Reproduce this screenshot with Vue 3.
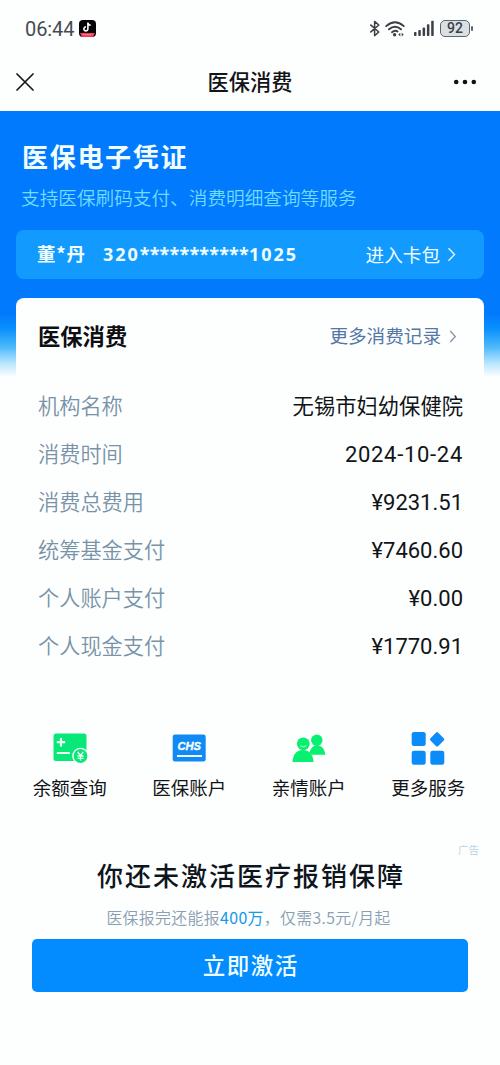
<script setup>
const rows = [
  { label: '机构名称', value: '无锡市妇幼保健院', kind: 'cjk' },
  { label: '消费时间', value: '2024-10-24', kind: 'date' },
  { label: '消费总费用', value: '¥9231.51', kind: 'money' },
  { label: '统筹基金支付', value: '¥7460.60', kind: 'money' },
  { label: '个人账户支付', value: '¥0.00', kind: 'money' },
  { label: '个人现金支付', value: '¥1770.91', kind: 'money' },
]
</script>

<template>
  <div class="page">
    <header class="status">
      <span class="time">06:44</span>
      <svg class="app-badge" width="17" height="17" viewBox="0 0 17 17">
        <defs><clipPath id="badge"><rect width="17" height="17" rx="4" /></clipPath></defs>
        <g clip-path="url(#badge)">
          <rect width="17" height="17" fill="#050507" />
          <path d="M1 13h15l-2 4H3z" fill="#f13a5c" />
          <path d="M3.5 14.7h10" stroke="#ff9bad" stroke-width="1" stroke-dasharray="1.6 .7" />
        </g>
        <path d="M8.9 2.6v6.2a2 2 0 1 1-2-1.9M8.9 2.8c.3 1.5 1.3 2.3 2.8 2.4" fill="none" stroke="#fff" stroke-width="1.6" />
      </svg>
      <div class="signals">
        <svg width="12" height="17" viewBox="0 0 12 17" fill="none" stroke="#3b4045" stroke-width="1.5" stroke-linejoin="round">
          <path d="M1.3 4.6 9.8 12 5.6 15.6V1.4L9.8 5 1.3 12.4" />
        </svg>
        <svg class="wifi" width="20" height="17" viewBox="0 0 20 17" fill="none" stroke="#3b4045" stroke-width="1.9" stroke-linecap="round">
          <path d="M1.2 6.1Q10 -1.6 18.8 6.1M4 9.3Q10 4 16 9.3M7 12.2Q10 9.6 12.5 11.5" />
          <circle cx="9.6" cy="14.7" r="1.7" fill="#3b4045" stroke="none" />
          <path d="m15.3 12.8-2 1.8 2 1.8zM16.7 12.8l2 1.8-2 1.8z" fill="#3b4045" stroke="none" />
        </svg>
        <svg class="bars" width="20" height="17" viewBox="0 0 20 17" fill="#3b4045">
          <rect x="0" y="12" width="2.5" height="4" rx=".8" />
          <rect x="4.3" y="10" width="2.5" height="6" rx=".8" />
          <rect x="8.6" y="7.6" width="2.5" height="8.4" rx=".8" />
          <rect x="12.9" y="4.2" width="2.5" height="11.8" rx=".8" />
          <rect x="17.2" y=".8" width="2.5" height="15.2" rx=".8" />
        </svg>
        <div class="battery">92</div>
        <i class="battery-tip"></i>
      </div>
    </header>

    <nav class="nav">
      <svg class="close" width="18" height="18" viewBox="0 0 18 18" fill="none" stroke="#15171a" stroke-width="1.7" stroke-linecap="round">
        <path d="m1 1 16 16M17 1 1 17" />
      </svg>
      <h1>医保消费</h1>
      <svg class="dots" width="24" height="6" viewBox="0 0 24 6" fill="#111">
        <circle cx="3.2" cy="3" r="2.3" /><circle cx="12" cy="3" r="2.3" /><circle cx="20.8" cy="3" r="2.3" />
      </svg>
    </nav>

    <main class="main">
      <h2 class="hero-title">医保电子凭证</h2>
      <p class="hero-sub">支持医保刷码支付、消费明细查询等服务</p>

      <div class="member">
        <span class="name">董*丹</span>
        <span class="number">320<span class="mask">***********</span>1025</span>
        <span class="enter">进入卡包</span>
        <svg class="arrow" width="9" height="15" viewBox="0 0 9 15" fill="none" stroke="#e2faff" stroke-width="1.4">
          <path d="m1.5 1.2 6 6.3-6 6.3" />
        </svg>
      </div>

      <section class="card">
        <div class="card-head">
          <h3>医保消费</h3>
          <span class="more">更多消费记录</span>
          <svg width="8" height="13" viewBox="0 0 8 13" fill="none" stroke="#7d8ea3" stroke-width="1.2">
            <path d="m1.3 1 5 5.500-5 5.500" />
          </svg>
        </div>
        <div v-for="row in rows" :key="row.label" class="row">
          <span class="label">{{ row.label }}</span>
          <span class="value" :class="row.kind">{{ row.value }}</span>
        </div>
      </section>
    </main>

    <section class="services">
      <div class="service">
        <svg width="36" height="36" viewBox="0 0 36 36">
          <rect x="1.500" y="3.500" width="33" height="27.500" rx="2.500" fill="#08e878" />
          <path d="M4.800 12.200h8.400M9 8v8.400M4.800 23h13" stroke="#effff6" stroke-width="2.200" />
          <circle cx="28.500" cy="26" r="8.300" fill="#fff" />
          <circle cx="28.500" cy="26" r="6.900" fill="#08e878" />
          <path d="m25.600 22 2.900 3.500 2.900-3.500M28.500 25.500v5M25.500 26h6M25.500 28.300h6" fill="none" stroke="#effff6" stroke-width="1.300" />
        </svg>
        <span>余额查询</span>
      </div>
      <div class="service">
        <svg width="36" height="36" viewBox="0 0 36 36">
          <rect x="1.700" y="4.500" width="33" height="27" rx="2.300" fill="#118bf3" />
          <text x="18.300" y="19.800" text-anchor="middle" textLength="23.500" lengthAdjust="spacingAndGlyphs" class="chs">CHS</text>
          <path d="M6 26h25" stroke="#eefaff" stroke-width="2" />
        </svg>
        <span>医保账户</span>
      </div>
      <div class="service">
        <svg width="36" height="36" viewBox="0 0 36 36" fill="#08f070">
          <circle cx="25.800" cy="10.300" r="5.700" />
          <path d="M18 24.700c.6-5 3.500-9.500 8-9.500s7.900 4 8.300 9.500z" />
          <path d="M.5 33c.2-8 4.500-12.600 11.300-12.600S22.800 25 23 33z" fill="#fdfefe" />
          <circle cx="12.300" cy="13.800" r="7.400" fill="#fdfefe" />
          <circle cx="12.300" cy="13.800" r="6.400" />
          <path d="M1.500 32c.2-6.500 3.500-12 10.500-12s10.300 5.500 10.500 12z" />
          <path d="M9.300 15.800q3 2 6 0" fill="none" stroke="#bfffdc" stroke-width="1" />
        </svg>
        <span>亲情账户</span>
      </div>
      <div class="service">
        <svg width="36" height="36" viewBox="0 0 36 36" fill="#0c8cf8">
          <rect x="1.700" y="2" width="14" height="14" rx="2.300" />
          <rect x="21.600" y="3.800" width="11" height="11" rx="1.600" transform="rotate(45 27.100 9.300)" />
          <rect x="1.700" y="20.800" width="14" height="14" rx="2.300" />
          <rect x="20.300" y="20.800" width="14" height="14" rx="2.300" />
        </svg>
        <span>更多服务</span>
      </div>
    </section>

    <section class="promo">
      <small>广告</small>
      <h4>你还未激活医疗报销保障</h4>
      <p>医保报完还能报<b>400万</b>，仅需3.5元/月起</p>
      <button type="button">立即激活</button>
    </section>
  </div>
</template>

<style>
body { background: #fff; }
</style>

<style scoped>
* { box-sizing: border-box; margin: 0; padding: 0; }
svg { display: block; flex: none; }
.page {
  width: 500px; height: 1065px; overflow: hidden; background: #fdfefe;
  font-family: "Noto Sans CJK SC", "Noto Sans", sans-serif; white-space: nowrap;
}
.status { height: 56px; padding: 1px 27px 0 25px; display: flex; align-items: center; }
.time { width: 49px; font: 400 20px/24px Roboto, sans-serif; color: #454b52; letter-spacing: -.1px; }
.app-badge { margin-left: 5px; }
.signals { margin-left: auto; display: flex; align-items: center; }
.wifi { margin-left: 4px; }
.bars { margin-left: 9px; }
.battery {
  margin-left: 6px; width: 30px; height: 17px; border: 1.500px solid #5e656b; border-radius: 5px;
  background: #dbe0e4; color: #3b4045; font: 500 14px/15px Roboto, sans-serif; text-align: center;
}
.battery-tip { width: 2px; height: 5px; margin-left: 1px; border-radius: 1px; background: #5e656b; }

.nav { height: 55px; padding: 0 23px 4px 16px; display: grid; grid-template-columns: 81px 1fr 74px; align-items: center; }
.nav h1 { margin-top: -2px; text-align: center; font-size: 21.200px; line-height: 30px; font-weight: 500; color: #121417; }
.dots { justify-self: end; }

.main {
  height: 591px; padding: 26px 16px 0;
  background: linear-gradient(180deg, #017afe 0, #017afe 203px, #0991fd 218px, #4db9fb 236px, #bce8fe 253px, #fdfefe 266px);
}
.hero-title { padding-left: 6px; font-size: 26px; line-height: 38px; font-weight: 700; letter-spacing: 1.700px; color: #f1fdff; }
.hero-sub { padding-left: 5px; margin-top: 8px; font-size: 18.650px; line-height: 28px; font-weight: 350; color: #70dcff; }
.member {
  margin-top: 19px; height: 49px; border-radius: 8px; background: #129aff; color: #effdff;
  padding: 0 28px 0 21px; display: flex; align-items: center;
}
.name { width: 66px; margin-top: -3px; font-size: 18.500px; font-weight: 700; letter-spacing: .8px; }
.number { margin-top: -2px; font: 700 18px/28px "Noto Sans", sans-serif; letter-spacing: 1.950px; }
.mask { letter-spacing: .170px; }
.enter { margin-left: auto; margin-top: -3px; font-size: 18.600px; font-weight: 400; }
.arrow { margin-left: 7px; }

.card { margin-top: 19px; height: 404px; border-radius: 8px; background: #fdfefe; padding: 14px 21px 0 22px; }
.card-head { height: 48px; display: flex; align-items: center; padding-right: 6px; }
.card-head h3 { margin-top: -2px; font-size: 22.300px; font-weight: 700; color: #0d0f12; }
.more { margin-left: auto; margin-top: -3px; margin-right: 8px; font-size: 18.600px; font-weight: 400; color: #5478a6; }
.row { height: 48px; display: flex; align-items: center; justify-content: space-between; }
.row:nth-child(2) { margin-top: 22px; }
.label { margin-top: -4px; font-size: 21.200px; font-weight: 350; color: #7893a8; }
.value { font-size: 21.300px; font-weight: 400; color: #111417; }
.value.cjk { margin-top: -4px; }
.value.date, .value.money { font-family: Roboto, sans-serif; font-size: 22px; }
.value.date { letter-spacing: .7px; }

.services { margin: 28px 12px 0 10px; display: grid; grid-template-columns: repeat(4, 1fr); }
.service { display: flex; flex-direction: column; align-items: center; color: #121417; }
.service span { margin-top: 7px; font-size: 18.500px; line-height: 28px; }
.chs { font: italic 700 11px "Liberation Sans", sans-serif; fill: #f5fcff; stroke: #f5fcff; stroke-width: .4px; }

.promo { margin-top: 41px; padding: 0 32px; text-align: center; display: flex; flex-direction: column; }
.promo small { align-self: flex-end; margin-right: -11px; font-size: 10.500px; line-height: 16px; font-weight: 350; color: #b5d4e6; }
.promo h4 { margin-top: -2px; font-size: 26px; line-height: 38px; font-weight: 500; letter-spacing: 2px; text-indent: 2px; color: #0e151d; }
.promo p { margin-top: 12px; padding-right: 3px; font-size: 15.900px; letter-spacing: .35px; line-height: 24px; font-weight: 350; color: #8a9fb1; }
.promo b { font-weight: 400; color: #149ae6; }
.promo button {
  margin-top: 9px; height: 53px; padding-bottom: 3px; border: 0; border-radius: 5px; background: #028cff; color: #edfdff;
  font-family: inherit; font-size: 22.500px; font-weight: 500; letter-spacing: 1.500px; text-indent: 1.500px;
}
</style>
